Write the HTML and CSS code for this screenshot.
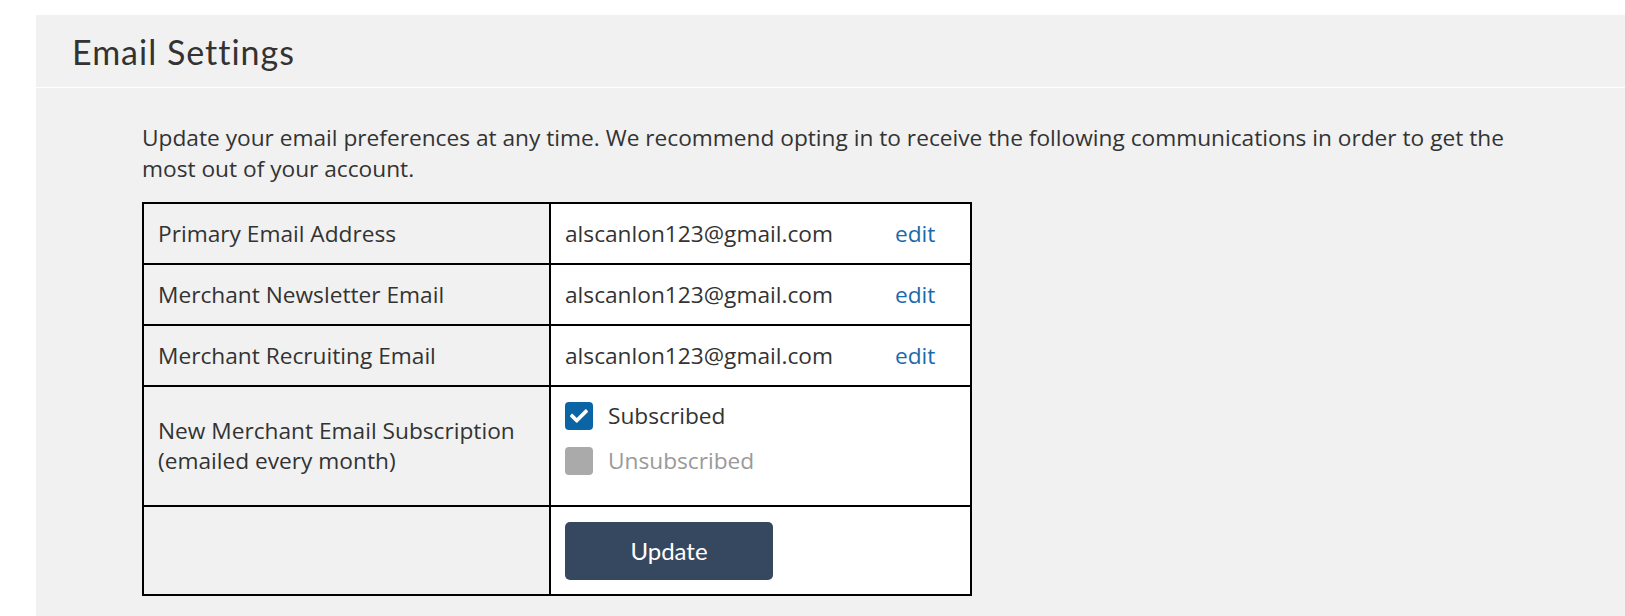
FILE: index.html
```html
<!DOCTYPE html>
<html lang="en">
<head>
    <meta charset="UTF-8">
    <meta name="viewport" content="width=device-width, initial-scale=1.0">
    <title>Email Settings</title>
    <link rel="stylesheet" href="styles.css">
</head>
<body>

    <div class="panel">
        <div class="panel-header">
            <h2>Email Settings</h2>
        </div>

        <div class="panel-body">
            <p class="intro">
                Update your email preferences at any time. We recommend opting in to receive the following communications in order to get the most out of your account.
            </p>

            <table class="settings">
                <tr class="row-email">
                    <td class="label">Primary Email Address</td>
                    <td class="value">
                        <div class="email-line">
                            <span class="address">alscanlon123@gmail.com</span>
                            <a href="#" class="edit">edit</a>
                        </div>
                    </td>
                </tr>
                <tr class="row-email">
                    <td class="label">Merchant Newsletter Email</td>
                    <td class="value">
                        <div class="email-line">
                            <span class="address">alscanlon123@gmail.com</span>
                            <a href="#" class="edit">edit</a>
                        </div>
                    </td>
                </tr>
                <tr class="row-email">
                    <td class="label">Merchant Recruiting Email</td>
                    <td class="value">
                        <div class="email-line">
                            <span class="address">alscanlon123@gmail.com</span>
                            <a href="#" class="edit">edit</a>
                        </div>
                    </td>
                </tr>
                <tr class="row-sub">
                    <td class="label">New Merchant Email Subscription<br>(emailed every month)</td>
                    <td class="value options">
                        <label class="option checked">
                            <span class="box">
                                <svg viewBox="0 0 512 380" width="18" height="14"><path d="M173.9 375.4l-166.4-166.4c-10-10-10-26.2 0-36.2l36.2-36.2c10-10 26.2-10 36.2 0L192 248.7 432.1 8.6c10-10 26.2-10 36.2 0l36.2 36.2c10 10 10 26.2 0 36.2l-294.4 294.4c-10 10-26.2 10-36.2 0z" fill="#fff"/></svg>
                            </span>
                            Subscribed
                        </label>
                        <label class="option">
                            <span class="box"></span>
                            Unsubscribed
                        </label>
                    </td>
                </tr>
                <tr class="row-action">
                    <td class="label"></td>
                    <td class="value">
                        <button class="update-btn">Update</button>
                    </td>
                </tr>
            </table>
        </div>
    </div>

</body>
</html>
```

FILE: styles.css
```css
body {
    margin: 0;
    padding: 15px 0 0 36px;
    background-color: #fff;
    font-family: "Open Sans", "DejaVu Sans", sans-serif;
    color: #333;
}
.panel {
    background-color: #f1f1f1;
    min-height: 601px;
}
.panel-header {
    height: 72px;
    border-bottom: 1px solid #fff;
    padding-left: 36px;
    display: flex;
    align-items: center;
}
.panel-header h2 {
    margin: 0;
    font-family: "Lato", sans-serif;
    font-weight: 400;
    font-size: 34px;
    letter-spacing: 1px;
    color: #333;
}
.panel-body {
    padding: 34px 106px 20px 106px;
}
p.intro {
    margin: 0 0 18px 0;
    font-size: 22.7px;
    line-height: 31px;
}
table.settings {
    border-collapse: collapse;
    width: 830px;
    font-size: 22.7px;
    line-height: 30px;
}
table.settings td {
    border: 2px solid #000;
    padding: 0 14px;
}
table.settings td.label {
    width: 378px;
    padding-left: 14px;
    padding-right: 13px;
}
td.value {
    background-color: #fff;
}
tr.row-email td {
    height: 59px;
}
.email-line {
    display: flex;
    align-items: center;
}
.email-line .address {
    width: 330px;
}
a.edit {
    color: #1a6aab;
    text-decoration: none;
}
tr.row-sub td {
    height: 118px;
}
table.settings td.options {
    vertical-align: top;
    padding-top: 15px;
    height: 103px;
}
.option {
    display: flex;
    align-items: center;
    gap: 15px;
    height: 28px;
    margin-bottom: 17px;
}
.option .box {
    width: 28px;
    height: 28px;
    border-radius: 4px;
    background-color: #aaa;
    display: flex;
    align-items: center;
    justify-content: center;
}
.option.checked .box {
    background-color: #0b64a3;
}
.option:not(.checked) {
    color: #9a9a9a;
}
tr.row-action td {
    height: 87px;
}
.update-btn {
    width: 208px;
    height: 58px;
    border: none;
    border-radius: 5px;
    background-color: #36485f;
    color: #fff;
    font-family: "Lato", sans-serif;
    font-size: 24px;
    cursor: pointer;
}
```
